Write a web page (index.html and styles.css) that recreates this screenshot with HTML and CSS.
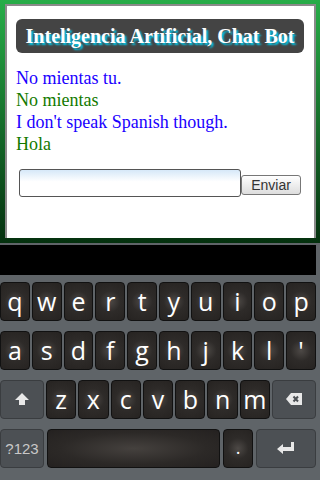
FILE: index.html
```html
<!DOCTYPE html>
<html>
<head>
    <title>Chat Bot</title>
    <meta name="viewport" content="width=device-width, initial-scale=1.0">
    <link rel="stylesheet" href="styles.css">
</head>
<body>
    <div class="page">
        <div class="panel">
            <div class="header">
                <h1>Inteligencia Artificial, Chat Bot</h1>
            </div>

            <div class="messages">
                <div class="msg user">No mientas tu.</div>
                <div class="msg bot">No mientas</div>
                <div class="msg user">I don't speak Spanish though.</div>
                <div class="msg bot">Hola</div>
            </div>

            <form class="chat-form" onsubmit="return false">
                <input type="text" class="chat-input">
                <button class="send-btn">Enviar</button>
            </form>
        </div>
    </div>

    <div class="keyboard">
        <div class="suggestions"></div>

        <div class="row">
            <div class="key">q</div>
            <div class="key">w</div>
            <div class="key">e</div>
            <div class="key">r</div>
            <div class="key">t</div>
            <div class="key">y</div>
            <div class="key">u</div>
            <div class="key">i</div>
            <div class="key">o</div>
            <div class="key">p</div>
        </div>

        <div class="row">
            <div class="key">a</div>
            <div class="key">s</div>
            <div class="key">d</div>
            <div class="key">f</div>
            <div class="key">g</div>
            <div class="key">h</div>
            <div class="key">j</div>
            <div class="key">k</div>
            <div class="key">l</div>
            <div class="key">'</div>
        </div>

        <div class="row">
            <div class="key special wide">
                <svg width="16" height="14" viewBox="0 0 16 14"><path d="M8 1 L15 8 L11 8 L11 13 L5 13 L5 8 L1 8 Z" fill="#e8e8e8"/></svg>
            </div>
            <div class="key">z</div>
            <div class="key">x</div>
            <div class="key">c</div>
            <div class="key">v</div>
            <div class="key">b</div>
            <div class="key">n</div>
            <div class="key">m</div>
            <div class="key special wide">
                <svg width="18" height="14" viewBox="0 0 18 14"><path d="M6 1 L17 1 L17 13 L6 13 L1 7 Z" fill="#e8e8e8"/><path d="M8.5 4.5 L13 9.5 M13 4.5 L8.5 9.5" stroke="#4c5054" stroke-width="2"/></svg>
            </div>
        </div>

        <div class="row bottom">
            <div class="key special symbols">?123</div>
            <div class="key space"></div>
            <div class="key period">.</div>
            <div class="key special enter">
                <svg width="20" height="14" viewBox="0 0 20 14"><path d="M15 1 L18 1 L18 10 L7 10 L7 13 L1 8 L7 3 L7 6 L15 6 Z" fill="#e8e8e8"/></svg>
            </div>
        </div>
    </div>
</body>
</html>
```

FILE: styles.css
```css
* { box-sizing: border-box; }

body {
    margin: 0;
    width: 320px;
    height: 480px;
    overflow: hidden;
    background: #5f6468;
}

.page {
    height: 243px;
    padding: 4px 4px 0 5px;
    background: linear-gradient(#27ad48, #04300e);
}

.panel {
    height: 234px;
    background: white;
    border: 2px solid #8a8a8a;
    border-bottom: none;
    padding: 13px 9px 0 9px;
}

.header {
    background: #444;
    border-radius: 6px;
    height: 34px;
    display: flex;
    align-items: center;
    justify-content: center;
    margin-right: 1px;
}

.header h1 {
    margin: 0;
    color: white;
    font-family: "Liberation Serif", serif;
    font-size: 20px;
    font-weight: bold;
    text-shadow: 2px 2px 2px #00cdf0;
}

.messages {
    margin-top: 14px;
    font-family: "Liberation Serif", serif;
    font-size: 18px;
    line-height: 22px;
}

.msg.user { color: #1a00ff; }
.msg.bot { color: #137a00; }

.chat-form {
    display: flex;
    align-items: flex-end;
    margin: 14px 0 0 3px;
}

.chat-input {
    width: 222px;
    height: 28px;
    margin: 0;
    border: 1px solid #555;
    border-radius: 3px;
    background: linear-gradient(#d6e8f8, #fff 45%);
}

.send-btn {
    width: 60px;
    height: 20px;
    margin: 0 0 2px 0;
    padding: 0;
    border: 1px solid #777;
    border-radius: 3px;
    background: linear-gradient(#fff, #ddd);
    color: #333;
    font-family: "Liberation Sans", Arial, sans-serif;
    font-size: 14px;
}

.keyboard {
    padding-top: 2px;
}

.suggestions {
    width: 316px;
    height: 30px;
    background: #000;
}

.row {
    display: flex;
    gap: 2px;
    width: 316px;
    height: 39px;
    margin-top: 7px;
}

.row + .row { margin-top: 10px; }

.key {
    flex: 1;
    display: flex;
    align-items: center;
    justify-content: center;
    background: radial-gradient(circle at 50% 50%, #4d4946 0%, #2e2b29 45%, #262321 100%);
    border: 1px solid #111;
    border-radius: 4px;
    color: white;
    font-family: "Open Sans", "DejaVu Sans", sans-serif;
    font-size: 25px;
    padding-bottom: 1px;
}

.key.special {
    background: #4c5054;
    border-color: #3a3d40;
}

.key.wide { flex: 1.48; }

.row.bottom { gap: 3px; }

.key.symbols {
    flex: none;
    width: 44px;
    color: #c8c8c8;
    font-family: "Liberation Sans", Arial, sans-serif;
    font-size: 15px;
    padding: 0;
}

.key.space {
    flex: none;
    width: 173px;
    background: radial-gradient(ellipse at 50% 50%, #45413e 0%, #2c2927 60%, #242120 100%);
}

.key.period {
    flex: none;
    width: 30px;
    font-size: 18px;
    align-items: flex-end;
    padding-bottom: 8px;
}

.key.enter {
    flex: none;
    width: 60px;
}
```
